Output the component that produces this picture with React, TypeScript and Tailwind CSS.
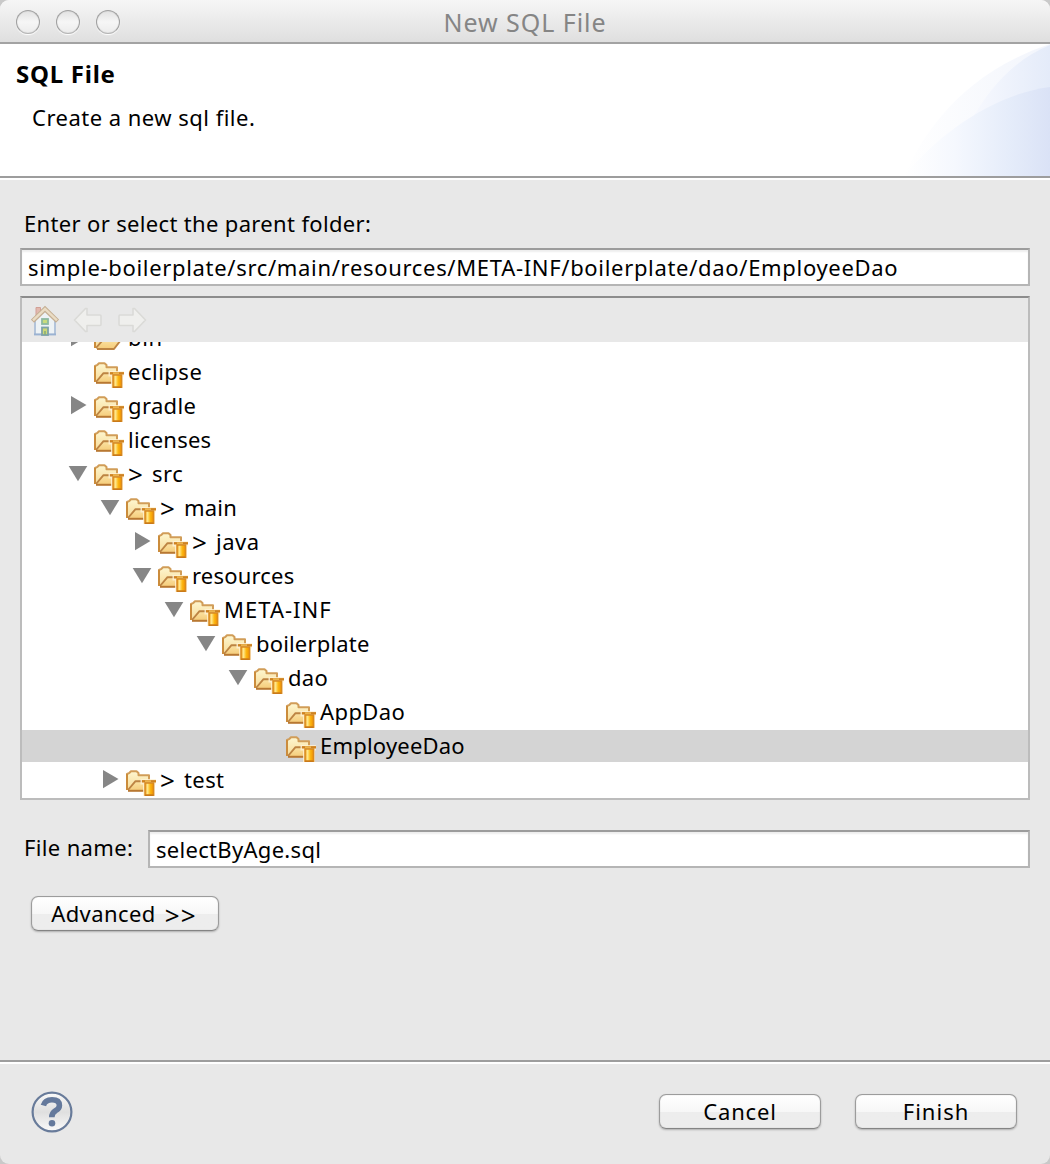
type NodeState = "open" | "closed" | "leaf";

type TreeItem = {
  label: string;
  state: NodeState;
  indent: string;
  tracking: string;
  dirty?: boolean;
  plain?: boolean;
  selected?: boolean;
};

const items: TreeItem[] = [
  { label: "bin", state: "closed", indent: "pl-[44px]", tracking: "tracking-[0.6px]", plain: true },
  { label: "eclipse", state: "leaf", indent: "pl-[44px]", tracking: "tracking-[0.5px]" },
  { label: "gradle", state: "closed", indent: "pl-[44px]", tracking: "tracking-[0.36px]" },
  { label: "licenses", state: "leaf", indent: "pl-[44px]", tracking: "tracking-[0.25px]" },
  { label: "src", state: "open", indent: "pl-[44px]", tracking: "tracking-[0.5px]", dirty: true },
  { label: "main", state: "open", indent: "pl-[76px]", tracking: "tracking-[0.2px]", dirty: true },
  { label: "java", state: "closed", indent: "pl-[108px]", tracking: "tracking-[0.5px]", dirty: true },
  { label: "resources", state: "open", indent: "pl-[108px]", tracking: "tracking-[0.2px]" },
  { label: "META-INF", state: "open", indent: "pl-[140px]", tracking: "tracking-[1px]" },
  { label: "boilerplate", state: "open", indent: "pl-[172px]", tracking: "tracking-[0.17px]" },
  { label: "dao", state: "open", indent: "pl-[204px]", tracking: "tracking-[0.3px]" },
  { label: "AppDao", state: "leaf", indent: "pl-[236px]", tracking: "tracking-[0.4px]" },
  { label: "EmployeeDao", state: "leaf", indent: "pl-[236px]", tracking: "tracking-[0.2px]", selected: true },
  { label: "test", state: "closed", indent: "pl-[76px]", tracking: "tracking-[0.4px]", dirty: true },
];

function Disclosure({ state }: { state: NodeState }) {
  return (
    <svg viewBox="0 0 26 32" className="h-8 w-[26px] shrink-0" fill="#868686">
      {state === "closed" && <path d="M5 6 L20.5 15 L5 24.3 Z" />}
      {state === "open" && <path d="M2.7 8 H21.3 L12 23.2 Z" />}
    </svg>
  );
}

function FolderIcon({ plain }: { plain?: boolean }) {
  return (
    <svg viewBox="0 0 32 32" className="h-8 w-8 shrink-0">
      <defs>
        <linearGradient id="folderBack" x1="0" y1="0" x2="0" y2="1">
          <stop offset="0" stopColor="#fdf6d0" />
          <stop offset="1" stopColor="#f8dc98" />
        </linearGradient>
        <linearGradient id="folderFlap" x1="0" y1="0" x2="0" y2="1">
          <stop offset="0" stopColor="#fbe3a4" />
          <stop offset="1" stopColor="#f5cb78" />
        </linearGradient>
        <linearGradient id="jarBody" x1="0" y1="0" x2="1" y2="0">
          <stop offset="0" stopColor="#f0a020" />
          <stop offset="0.3" stopColor="#ffe88c" />
          <stop offset="0.6" stopColor="#fdb813" />
          <stop offset="1" stopColor="#f09000" />
        </linearGradient>
      </defs>
      <path
        d="M3 25.5 V10 L5.5 8.8 L7 7.2 H12.5 L14.5 9 V11.2 H25 V17"
        fill="url(#folderBack)"
        stroke="#d19d58"
        strokeWidth="2"
        strokeLinejoin="round"
      />
      <path
        d={plain ? "M4 27 L11.5 17.2 H29.5 L22 27 Z" : "M4 27 L11.5 17.2 H26 V27 Z"}
        fill="url(#folderFlap)"
      />
      <path
        d={plain ? "M4 26 L11.5 17.2 H29.5 L22 27 H5" : "M4 26 L11.5 17.2 H20"}
        fill="none"
        stroke="#bd8443"
        strokeWidth="1.9"
        strokeLinejoin="round"
      />
      {!plain && <path d="M4 26.8 H20" stroke="#b87832" strokeWidth="2" />}
      <path d="M3 10 V26" stroke="#cb8c3c" strokeWidth="2" />
      {!plain && (
        <>
          <path d="M16.5 15 H32 V20.5 H31 V32 H19 V20.5 H16.5 Z" fill="#fff3d6" opacity="0.8" />
          <rect x="21" y="19" width="8.6" height="12.2" fill="url(#jarBody)" stroke="#d98a20" strokeWidth="1.5" />
          <path d="M18 17.3 H32" stroke="#cf8220" strokeWidth="2.4" />
          <path d="M21 17.1 H27" stroke="#f5c45c" strokeWidth="1.3" />
          <path d="M21 31.2 H29.5" stroke="#c87818" strokeWidth="1.4" />
        </>
      )}
    </svg>
  );
}

function TreeRow({ item }: { item: TreeItem }) {
  return (
    <div className={`mb-0.5 flex h-8 shrink-0 ${item.indent} ${item.selected ? "bg-[#d4d4d4]" : ""}`}>
      <Disclosure state={item.state} />
      <FolderIcon plain={item.plain} />
      <span className={`ml-1 flex leading-[30px] ${item.tracking}`}>
        {item.dirty && <span className="w-6 text-[26px] leading-[33px]">&gt;</span>}
        <span>{item.label}</span>
      </span>
    </div>
  );
}

function HomeIcon() {
  return (
    <svg viewBox="0 0 28 32" className="h-8 w-7">
      <path d="M5 2.5 H9.5 V10 L5 13 Z" fill="#e2b8ae" stroke="#d2a096" />
      <path d="M4 14 L14 5 L24 14 V29.5 H4 Z" fill="#edf2f5" />
      <path d="M4 16 V29.5 M24 16 V29.5" stroke="#b3c4da" strokeWidth="2" />
      <path d="M3 29.4 H25" stroke="#9ab2d2" strokeWidth="2" />
      <path d="M1.5 16.2 L14 4 L26.5 16.2" fill="none" stroke="#c4ae92" strokeWidth="4.6" />
      <path d="M2 15.4 L14 3.8 L26 15.4" fill="none" stroke="#eadcc4" strokeWidth="2.4" />
      <rect x="11" y="14" width="6" height="5" fill="#c8dc7c" stroke="#8db9a0" strokeWidth="1.8" />
      <rect x="11" y="22.5" width="6" height="7.5" fill="#ccd877" stroke="#7ea2a8" strokeWidth="1.8" />
      <path d="M14 26 V30" stroke="#86ad7c" strokeWidth="1.6" />
    </svg>
  );
}

function ArrowIcon({ flipped }: { flipped?: boolean }) {
  return (
    <svg viewBox="0 0 30 28" className={flipped ? "h-7 w-[30px] -scale-x-100" : "h-7 w-[30px]"}>
      <path
        d="M1.5 14 L12.5 2.5 H14 V9 H27 Q28 9 28 10 V18.5 Q28 19.5 27 19.5 H14 V25.5 H12.5 Z"
        fill="#efefed"
        stroke="#dadad7"
        strokeWidth="1.6"
        strokeLinejoin="round"
      />
    </svg>
  );
}

function WindowDot() {
  return (
    <span className="size-6 rounded-full border-[1.5px] border-[#a0a0a0] border-b-[#b4b4b4] bg-linear-to-b from-[#e2e2e2] via-[#f6f6f6] to-[#ececec] shadow-[inset_0_0_1px_#a8a8a8,0_1px_1px_#fff]" />
  );
}

function PushButton({ label, symbol, className }: { label: string; symbol?: string; className: string }) {
  return (
    <button
      className={`flex h-[35px] justify-center rounded-[7px] border-[1.5px] border-[#9c9c9c] border-b-[#848484] bg-linear-to-b from-white from-0% via-[#f7f7f7] via-50% to-[#ededed] to-52% leading-[33px] shadow-[inset_0_0_1px_#b0b0b0,0_1px_2px_rgba(0,0,0,0.25)] ${className}`}
    >
      <span>{label}</span>
      {symbol && <span className="ml-[9px] text-[26px] leading-9 tracking-[1.2px]">{symbol}</span>}
    </button>
  );
}

function HeaderArt() {
  return (
    <svg viewBox="0 0 150 132" className="h-[132px] w-[150px]">
      <defs>
        <linearGradient id="arcOuter" x1="0" y1="0" x2="1" y2="0">
          <stop offset="0" stopColor="#ffffff" />
          <stop offset="1" stopColor="#f2f5fc" />
        </linearGradient>
        <linearGradient id="arcMiddle" x1="0" y1="0" x2="1" y2="0">
          <stop offset="0.3" stopColor="#f6f8fe" />
          <stop offset="1" stopColor="#e4ebf9" />
        </linearGradient>
        <linearGradient id="arcInner" x1="0" y1="0" x2="1" y2="0">
          <stop offset="0" stopColor="#ffffff" />
          <stop offset="0.35" stopColor="#f5f8fe" />
          <stop offset="0.7" stopColor="#e6edfa" />
          <stop offset="1" stopColor="#dae2f6" />
        </linearGradient>
      </defs>
      <path d="M4 132 C22 92 60 30 150 0 V132 Z" fill="url(#arcOuter)" />
      <path d="M46 132 C62 90 90 25 150 1 V132 Z" fill="url(#arcMiddle)" />
      <path d="M4 132 C40 88 95 50 150 43 V132 Z" fill="url(#arcInner)" />
    </svg>
  );
}

function HelpIcon() {
  return (
    <svg viewBox="0 0 44 44" className="size-11">
      <defs>
        <linearGradient id="helpFill" x1="0" y1="0" x2="0" y2="1">
          <stop offset="0" stopColor="#fafafa" />
          <stop offset="0.5" stopColor="#dfdfdf" />
          <stop offset="1" stopColor="#fafafa" />
        </linearGradient>
      </defs>
      <circle cx="22" cy="22" r="19.4" fill="url(#helpFill)" stroke="#687b9a" strokeWidth="2.2" />
      <path
        d="M13.4 15.6 Q15 9.8 22 9.8 Q29.4 9.8 29.4 15.4 Q29.4 18.4 25.6 20.6 Q21.8 23 21.8 27.2"
        fill="none"
        stroke="#64799c"
        strokeWidth="5.6"
      />
      <circle cx="22" cy="33.2" r="3.3" fill="#64799c" />
    </svg>
  );
}

export default function App() {
  return (
    <div className="h-[1164px] w-[1050px] bg-[#c9c9c9] font-['Noto_Sans',sans-serif] text-[22px] text-black">
      <div className="flex h-full flex-col overflow-hidden rounded-[9px] bg-[#e8e8e8]">
        <header className="grid h-11 shrink-0 grid-cols-[1fr_auto_1fr] items-center border-b-2 border-[#a3a3a3] bg-linear-to-b from-[#f6f6f6] to-[#dfdfdf]">
          <div className="flex gap-4 pt-0.5 pl-4">
            <WindowDot />
            <WindowDot />
            <WindowDot />
          </div>
          <h1 className="pt-0.5 text-[25px] leading-8 tracking-[0.95px] text-[#858585]">New SQL File</h1>
        </header>

        <section className="flex h-[134px] shrink-0 justify-between border-b-2 border-[#9d9d9d] bg-white">
          <div className="pt-[14px] pl-4">
            <h2 className="text-[24px] leading-8 font-bold tracking-[0.75px]">SQL File</h2>
            <p className="mt-[11px] pl-4 leading-8 tracking-[0.48px]">Create a new sql file.</p>
          </div>
          <HeaderArt />
        </section>

        <main className="flex h-[882px] shrink-0 flex-col border-t-2 border-white px-5 pt-[27px]">
          <label className="pl-1 leading-8 tracking-[0.34px]">Enter or select the parent folder:</label>
          <div className="mt-[9px] h-[38px] shrink-0 border-2 border-[#b5b5b5] border-t-[#9c9c9c] bg-white pl-[6px] leading-[35px] tracking-[0.68px] shadow-[inset_0_2px_2px_#eeeeee]">
            simple-boilerplate/src/main/resources/META-INF/boilerplate/dao/EmployeeDao
          </div>

          <div className="mt-[10px] flex h-[504px] shrink-0 flex-col border-2 border-[#bcbcbc] border-t-[#8c8c8c] bg-white">
            <div className="flex h-11 shrink-0 items-start bg-[#e8e8e8] pl-[9px]">
              <div className="mt-[7px]">
                <HomeIcon />
              </div>
              <div className="mt-2 ml-[14px]">
                <ArrowIcon />
              </div>
              <div className="mt-2 ml-[14px]">
                <ArrowIcon flipped />
              </div>
            </div>
            <div className="flex min-h-0 flex-1 flex-col overflow-hidden">
              <div className="-mt-5 flex flex-col">
                {items.map((item) => (
                  <TreeRow key={item.label} item={item} />
                ))}
              </div>
            </div>
          </div>

          <div className="mt-[30px] flex h-[38px] shrink-0">
            <label className="w-32 pl-1 leading-[34px] tracking-[0.35px]">File name:</label>
            <div className="flex-1 border-2 border-[#b5b5b5] border-t-[#9c9c9c] bg-white pl-[6px] leading-[35px] tracking-[0.3px] shadow-[inset_0_2px_2px_#eeeeee]">
              selectByAge.sql
            </div>
          </div>

          <div className="mt-7 pl-[11px]">
            <PushButton label="Advanced" symbol=">>" className="w-[188px] pr-0.5 tracking-[0.4px]" />
          </div>
        </main>

        <footer className="flex flex-1 items-start border-t-2 border-[#9d9d9d] pr-[33px] pl-[30px] shadow-[inset_0_2px_0_#fff]">
          <div className="mt-7">
            <HelpIcon />
          </div>
          <PushButton label="Cancel" className="mt-8 ml-auto w-[162px] tracking-[0.84px]" />
          <PushButton label="Finish" className="mt-8 ml-[34px] w-[162px] tracking-[1.02px]" />
        </footer>
      </div>
    </div>
  );
}
